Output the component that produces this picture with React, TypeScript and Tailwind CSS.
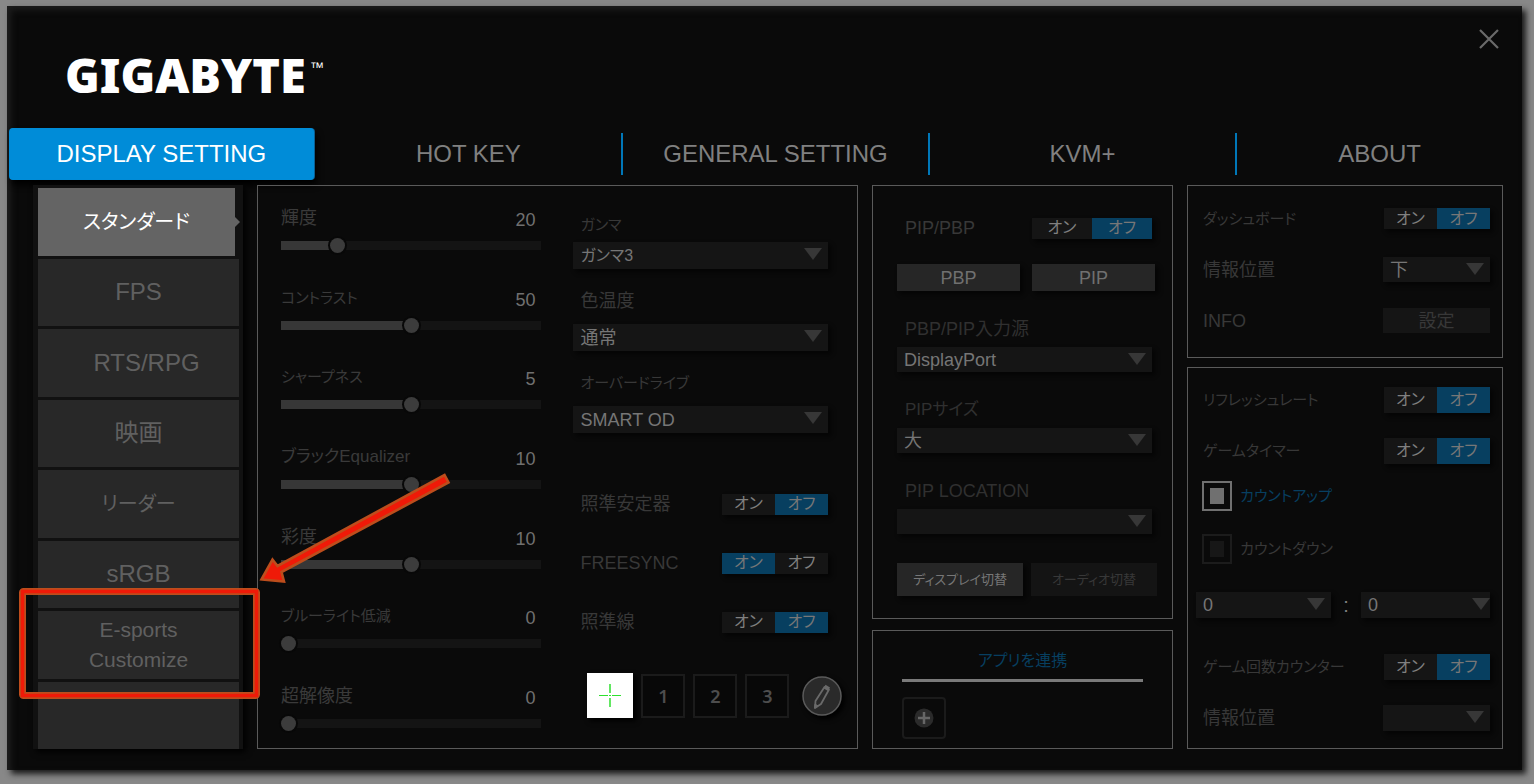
import { useState, type CSSProperties, type ReactNode } from 'react';

const tabs = ['DISPLAY SETTING', 'HOT KEY', 'GENERAL SETTING', 'KVM+', 'ABOUT'];

const modes = [
  { id: 'standard', label: 'スタンダード', style: 'text-xl' },
  { id: 'fps', label: 'FPS', style: 'text-2xl' },
  { id: 'rts', label: 'RTS/RPG', style: 'text-2xl pl-4' },
  { id: 'movie', label: '映画', style: 'text-2xl' },
  { id: 'reader', label: 'リーダー', style: 'text-xl' },
  { id: 'srgb', label: 'sRGB', style: 'text-2xl' },
  { id: 'esports', label: 'E-sports Customize', style: 'text-[21px] leading-[30px] px-10' },
  { id: 'empty', label: '', style: 'text-2xl' },
];

const sliders = [
  { id: 'brightness', label: '輝度', value: 20, max: 100, size: 'text-lg' },
  { id: 'contrast', label: 'コントラスト', value: 50, max: 100, size: 'text-[15px]' },
  { id: 'sharpness', label: 'シャープネス', value: 5, max: 10, size: 'text-[15px]' },
  { id: 'black', label: 'ブラックEqualizer', value: 10, max: 20, size: 'text-[17px]' },
  { id: 'saturation', label: '彩度', value: 10, max: 20, size: 'text-lg' },
  { id: 'bluelight', label: 'ブルーライト低減', value: 0, max: 10, size: 'text-[15px]' },
  { id: 'resolution', label: '超解像度', value: 0, max: 10, size: 'text-lg' },
];

function Panel({ className = '', children }: { className?: string; children: ReactNode }) {
  return <section className={`border border-[#5a5a5a] ${className}`}>{children}</section>;
}

interface SliderProps {
  id: string;
  label: string;
  initial: number;
  max: number;
  size: string;
}

function Slider({ id, label, initial, max, size }: SliderProps) {
  const [value, setValue] = useState(initial);

  return (
    <div>
      <div className="flex items-center justify-between h-6 pr-[6px]">
        <label htmlFor={id} className={`${size} leading-6 text-[#3a3a3a]`}>
          {label}
        </label>
        <output htmlFor={id} className="pt-1 text-lg leading-6 text-[#707070]">
          {value}
        </output>
      </div>
      <input
        id={id}
        type="range"
        min={0}
        max={max}
        value={value}
        onChange={(e) => setValue(Number(e.target.value))}
        style={{ '--fill': `${(value / max) * 100}%` } as CSSProperties}
        className="block w-full h-[15px] mt-2 appearance-none bg-transparent [&::-webkit-slider-runnable-track]:h-[9px] [&::-webkit-slider-runnable-track]:bg-[linear-gradient(to_right,#373737_var(--fill),#141414_var(--fill))] [&::-webkit-slider-thumb]:appearance-none [&::-webkit-slider-thumb]:w-[15px] [&::-webkit-slider-thumb]:h-[15px] [&::-webkit-slider-thumb]:-mt-[3px] [&::-webkit-slider-thumb]:rounded-full [&::-webkit-slider-thumb]:bg-[#3c3c3c] [&::-webkit-slider-thumb]:shadow-[0_0_0_2px_#080808]"
      />
    </div>
  );
}

interface SelectProps {
  id: string;
  label?: string;
  options: string[];
  className: string;
  size?: string;
  arrow?: string;
}

function Select({ id, label, options, className, size = 'text-lg', arrow = 'right-[6px]' }: SelectProps) {
  return (
    <div className={`relative ${className}`}>
      <select
        id={id}
        aria-label={label}
        className={`block w-full h-full pl-[7px] appearance-none rounded-none bg-[#151515] ${size} leading-6 text-[#767676] shadow-[3px_3px_4px_#050505]`}
      >
        {options.map((option) => (
          <option key={option}>{option}</option>
        ))}
      </select>
      <svg className={`absolute top-[6px] ${arrow} pointer-events-none`} width="18" height="12" viewBox="0 0 18 12">
        <path d="M0 0h18L9 12z" fill="#373737" />
      </svg>
    </div>
  );
}

function Toggle({ label, initial = false, className }: { label: string; initial?: boolean; className: string }) {
  const [on, setOn] = useState(initial);
  const active = 'bg-[#073f60] text-[#777777]';
  const idle = 'bg-[#151515] text-[#808080]';

  return (
    <div role="group" aria-label={label} className={`grid grid-cols-2 text-base shadow-[3px_3px_4px_#050505] ${className}`}>
      <button aria-pressed={on} onClick={() => setOn(true)} className={`flex items-center justify-center leading-5 ${on ? active : idle}`}>
        オン
      </button>
      <button aria-pressed={!on} onClick={() => setOn(false)} className={`flex items-center justify-center leading-5 ${on ? idle : active}`}>
        オフ
      </button>
    </div>
  );
}

function Row({ label, size = 'text-lg', className = '', children }: { label: string; size?: string; className?: string; children: ReactNode }) {
  return (
    <div className={`flex items-center justify-between ${className}`}>
      <span className={`${size} leading-6 text-[#383838]`}>{label}</span>
      {children}
    </div>
  );
}

function PictureSettings() {
  const [crosshair, setCrosshair] = useState(0);

  return (
    <Panel className="grid grid-cols-[261fr_255fr] gap-x-8 pl-[23px] pr-[29px]">
      <div className="flex flex-col justify-between pt-5 pb-[17px]">
        {sliders.map((s) => (
          <Slider key={s.id} id={s.id} label={s.label} initial={s.value} max={s.max} size={s.size} />
        ))}
      </div>

      <div className="pt-[27px]">
        <label htmlFor="gamma" className="block pl-[7px] text-[15px] leading-6 text-[#383838]">ガンマ</label>
        <Select id="gamma" options={['ガンマ3']} size="text-base" className="h-[27px] mt-[5px]" />
        <label htmlFor="temperature" className="block mt-5 pl-[7px] text-lg leading-6 text-[#383838]">色温度</label>
        <Select id="temperature" options={['通常']} className="h-[27px] mt-[11px]" />
        <label htmlFor="overdrive" className="block mt-5 pl-[7px] text-[15px] leading-6 text-[#383838]">オーバードライブ</label>
        <Select id="overdrive" options={['SMART OD']} className="h-[27px] mt-[11px]" />

        <div className="flex flex-col gap-[35px] mt-[59px] pl-[7px]">
          <Row label="照準安定器" className="h-6">
            <Toggle label="照準安定器" className="w-[106px] h-[21px]" />
          </Row>
          <Row label="FREESYNC" className="h-6">
            <Toggle label="FREESYNC" initial className="w-[106px] h-[21px]" />
          </Row>
          <Row label="照準線" className="h-6">
            <Toggle label="照準線" className="w-[106px] h-[21px]" />
          </Row>
        </div>

        <div className="flex items-center gap-2 mt-[39px] ml-[14px] -mr-4">
          <button
            aria-label="crosshair"
            aria-pressed={crosshair === 0}
            onClick={() => setCrosshair(0)}
            className="w-[46px] h-[45px] bg-white shadow-[3px_3px_5px_#000000]"
          >
            <svg width="46" height="45" viewBox="0 0 46 45" fill="none" stroke="#2fe02f">
              <path d="M23 11v9M23 25v9" strokeWidth="1.500" />
              <path d="M12 22.5h9M25 22.5h9M22 22.5h2" strokeWidth="1" />
            </svg>
          </button>
          {[1, 2, 3].map((n) => (
            <button
              key={n}
              aria-pressed={crosshair === n}
              onClick={() => setCrosshair(n)}
              className="w-11 h-11 border-2 border-[#1b1b1b] bg-[#080808] font-['Noto_Sans'] font-semibold text-lg leading-6 text-[#4d4d4d]"
            >
              {n}
            </button>
          ))}
          <button aria-label="edit" className="w-10 h-10 ml-[5px] rounded-full shadow-[3px_3px_5px_#000000]">
            <svg width="40" height="40" viewBox="0 0 40 40" fill="none" stroke="#6a6a6a">
              <circle cx="20" cy="20" r="19" fill="#2a2a2a" stroke="#5a5a5a" strokeWidth="1.5" />
              <path d="M22.500 11l4.500 2.500-8 14.500-6 4 .5-7z" strokeWidth="1.800" strokeLinejoin="round" />
              <path d="M22.500 10.500l4.500 2.700" strokeWidth="4" />
              <path d="M13 28l-.5 4 3.500-2z" fill="#6a6a6a" />
            </svg>
          </button>
        </div>
      </div>
    </Panel>
  );
}

function PipSettings() {
  return (
    <div className="flex flex-col gap-[11px]">
      <Panel className="pl-6 pr-5 pt-[30px] pb-[22px]">
        <Row label="PIP/PBP" className="h-6 pl-2">
          <Toggle label="PIP/PBP" className="w-[120px] h-[21px]" />
        </Row>
        <div className="grid grid-cols-2 gap-3 mt-6 -mr-[3px] text-lg text-[#707070]">
          <button className="h-[27px] bg-[#262626] leading-6 shadow-[3px_3px_4px_#050505]">PBP</button>
          <button className="h-[27px] bg-[#262626] leading-6 shadow-[3px_3px_4px_#050505]">PIP</button>
        </div>
        <label htmlFor="source" className="block mt-[26px] pl-2 text-lg leading-6 text-[#303030]">PBP/PIP入力源</label>
        <Select id="source" options={['DisplayPort']} className="h-[25px] mt-[6px]" />
        <label htmlFor="pipsize" className="block mt-[26px] pl-2 text-[17px] leading-6 text-[#303030]">PIPサイズ</label>
        <Select id="pipsize" options={['大']} className="h-[25px] mt-[6px]" />
        <label htmlFor="location" className="block mt-[26px] pl-2 text-lg leading-6 text-[#303030]">PIP LOCATION</label>
        <Select id="location" options={['']} className="h-[25px] mt-[6px]" />
        <div className="grid grid-cols-2 gap-2 mt-[29px] -mr-[5px] text-[13px]">
          <button className="h-[33px] bg-[#262626] text-[#777777] shadow-[3px_3px_4px_#050505]">ディスプレイ切替</button>
          <button className="h-[33px] bg-[#141414] text-[#383838]">オーディオ切替</button>
        </div>
      </Panel>

      <Panel className="flex-1 px-[29px] pt-[18px]">
        <h2 className="text-center text-base leading-6 text-[#073f60]">アプリを連携</h2>
        <hr className="mt-[6px] border-t-3 border-[#7a7a7a]" />
        <button aria-label="add" className="flex items-center justify-center w-11 h-[42px] mt-[15px] rounded-sm border-2 border-[#1b1b1b]">
          <svg width="20" height="20" viewBox="0 0 20 20">
            <circle cx="10" cy="10" r="9.500" fill="#2b2b2b" />
            <path d="M10 4v12M4 10h12" stroke="#666666" strokeWidth="2.500" />
          </svg>
        </button>
      </Panel>
    </div>
  );
}

function GameSettings() {
  const [timer, setTimer] = useState('up');
  const radio =
    'w-[30px] h-[30px] px-[6px] py-[5px] appearance-none border-2 bg-clip-content border-[#1c1c1c] bg-[#171717] checked:border-[#707070] checked:bg-[#707070]';

  return (
    <div className="flex flex-col gap-[9px]">
      <Panel className="flex flex-col gap-[26px] pl-[15px] pr-3 pt-5 pb-6">
        <Row label="ダッシュボード" size="text-[15px]" className="h-[25px]">
          <Toggle label="ダッシュボード" className="w-[106px] h-[21px]" />
        </Row>
        <Row label="情報位置" className="h-[25px]">
          <Select id="infopos" label="情報位置" options={['下']} className="w-[107px] h-[25px]" />
        </Row>
        <Row label="INFO" className="h-[25px]">
          <button className="w-[107px] h-[25px] bg-[#151515] text-lg leading-5 text-[#383838]">設定</button>
        </Row>
      </Panel>

      <Panel className="flex-1 pl-[15px] pr-3 pt-[19px] pb-4">
        <Row label="リフレッシュレート" size="text-[15px]" className="h-[26px]">
          <Toggle label="リフレッシュレート" className="w-[106px] h-[26px]" />
        </Row>
        <Row label="ゲームタイマー" size="text-[15px]" className="h-[26px] mt-[25px]">
          <Toggle label="ゲームタイマー" className="w-[106px] h-[26px]" />
        </Row>

        <div className="flex items-center gap-2 mt-[17px] -ml-px">
          <input id="countup" type="radio" name="timer" checked={timer === 'up'} onChange={() => setTimer('up')} className={radio} />
          <label htmlFor="countup" className="text-[15px] leading-6 text-[#073f60]">カウントアップ</label>
        </div>
        <div className="flex items-center gap-2 mt-[23px] -ml-px">
          <input id="countdown" type="radio" name="timer" checked={timer === 'down'} onChange={() => setTimer('down')} className={radio} />
          <label htmlFor="countdown" className="text-[15px] leading-6 text-[#383838]">カウントダウン</label>
        </div>

        <div className="grid grid-cols-[135fr_30fr_129fr] items-center mt-7 -ml-[7px]">
          <Select id="hours" label="hours" options={['0']} className="h-[26px]" />
          <span className="text-center text-xl leading-6 text-[#808080]">:</span>
          <Select id="minutes" label="minutes" options={['0']} className="h-[26px]" arrow="right-0" />
        </div>

        <Row label="ゲーム回数カウンター" size="text-[15px]" className="h-[26px] mt-9">
          <Toggle label="ゲーム回数カウンター" className="w-[106px] h-[26px]" />
        </Row>
        <Row label="情報位置" className="h-[26px] mt-[25px]">
          <Select id="counterpos" label="情報位置" options={['']} className="w-[107px] h-[26px]" />
        </Row>
      </Panel>
    </div>
  );
}

export default function App() {
  const [tab, setTab] = useState(0);
  const [mode, setMode] = useState('standard');

  return (
    <div className="relative flex flex-col min-h-screen pl-[7px] pr-3 pt-[6px] pb-[14px] bg-[#888888] font-['Liberation_Sans','Noto_Sans_CJK_JP',sans-serif] [font-feature-settings:'palt']">
      <div className="flex flex-1 flex-col pb-[21px] bg-[#0a0a0a] shadow-[4px_4px_6px_#1a1a1a,inset_4px_4px_6px_#1d1d1d]">
        {/* Title bar */}
        <header className="flex items-start justify-between h-[122px] pl-[58px] pr-[23px]">
          <h1 className="flex items-start pt-[39px] font-['Noto_Sans',sans-serif] font-black text-[47px] leading-[60px] text-white">
            GIGABYTE
            <span className="pl-1 pt-[14px] font-['Liberation_Sans'] font-normal text-sm leading-4">™</span>
          </h1>
          <button aria-label="close" className="mt-[23px]">
            <svg width="20" height="20" viewBox="0 0 20 20" stroke="#6a6a6a" strokeWidth="2.200">
              <path d="M1 1l18 18M19 1L1 19" />
            </svg>
          </button>
        </header>

        {/* Main tabs */}
        <nav className="grid grid-cols-[307fr_308fr_307fr_308fr_285fr] items-center h-[52px] pl-[2px]">
          {tabs.map((name, i) => (
            <button
              key={name}
              onClick={() => setTab(i)}
              className={`text-2xl ${
                i === tab
                  ? 'h-[52px] mr-[2px] rounded-sm bg-[#008cd8] text-white shadow-[1px_0_0_#0b5f92,3px_5px_6px_#000000]'
                  : 'h-[42px] text-[#808080]'
              } ${i > 0 && i < 4 ? 'border-r-2 border-[#0077b8]' : ''}`}
            >
              {name}
            </button>
          ))}
        </nav>

        <main className="grid flex-1 grid-cols-[210px_601fr_301fr_316fr] gap-x-[14px] mt-[5px] pl-[26px] pr-[19px]">
          {/* Picture modes */}
          <aside className="grid auto-rows-fr gap-[3px] pt-[3px] pl-[5px] pr-1 bg-[#111111] shadow-[3px_3px_6px_#000000]">
            {modes.map((m) => (
              <button
                key={m.id}
                aria-label={m.label || 'custom'}
                onClick={() => setMode(m.id)}
                className={`relative ${m.style} ${
                  m.id === mode ? 'mr-1 bg-[#646464] text-white' : 'bg-[#282828] text-[#606060]'
                }`}
              >
                {m.label}
                {m.id === mode && (
                  <svg className="absolute -right-[5px] top-7" width="6" height="12" viewBox="0 0 6 12">
                    <path d="M0 0l6 6-6 6z" fill="#646464" />
                  </svg>
                )}
              </button>
            ))}
          </aside>

          <PictureSettings />
          <PipSettings />
          <GameSettings />
        </main>
      </div>

      {/* Callout around the E-sports mode */}
      <svg className="absolute left-4 top-[470px] pointer-events-none" width="440" height="234" viewBox="16 470 440 234" fill="none">
        <rect x="22.500" y="591.500" width="234" height="104" rx="1" stroke="#bd4d1c" strokeWidth="7" strokeLinejoin="round" />
        <rect x="22.500" y="591.500" width="234" height="104" stroke="#ef1a08" strokeWidth="3.500" />
        <path
          d="M261.500 579.500L272.500 559.500 277.500 566 444.500 475 448.500 482.500 281.500 572 284 581.500z"
          fill="#ef1a08"
          stroke="#bd4d1c"
          strokeWidth="2.600"
        />
      </svg>
    </div>
  );
}
